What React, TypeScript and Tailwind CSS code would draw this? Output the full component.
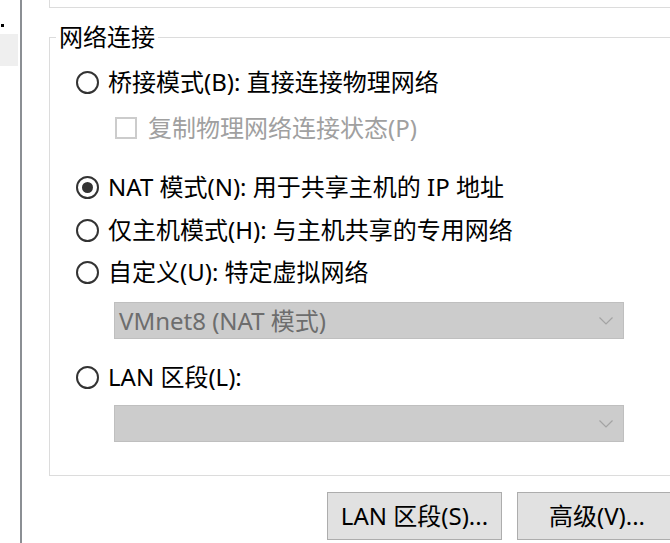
import React from 'react';

const font = { fontFamily: '"Noto Sans", "Noto Sans CJK SC", sans-serif' };

function Radio({ checked, label }: { checked?: boolean; label: string }) {
  return (
    <div className="flex items-center h-[42px] pl-[26px]">
      <span className="w-[23px] h-[23px] rounded-full border-2 border-[#333333] flex items-center justify-center shrink-0">
        {checked && <span className="w-[11px] h-[11px] rounded-full bg-[#333333]" />}
      </span>
      <span className="ml-[9px] text-black whitespace-nowrap">{label}</span>
    </div>
  );
}

function Select({ value }: { value?: string }) {
  return (
    <div className="ml-[64px] w-[510px] h-[37px] bg-[#cccccc] border border-[#bfbfbf] flex items-center justify-between pl-[4px] pr-[9px]">
      <span className="text-[#6d6d6d] whitespace-nowrap">{value}</span>
      <svg width="16" height="10" viewBox="0 0 16 10" fill="none">
        <path d="M1.5 1.5L8 8l6.5-6.5" stroke="#a3a3a3" strokeWidth="1.2" />
      </svg>
    </div>
  );
}

export default function App() {
  return (
    <div className="w-[670px] h-[543px] bg-white flex overflow-hidden text-[24px] leading-[26px]" style={font}>
      {/* left strip */}
      <div className="w-[20px] shrink-0 flex flex-col">
        <div className="h-[34px] relative">
          <span className="absolute left-[1px] top-[24px] w-[3px] h-[3px] bg-black" />
        </div>
        <div className="h-[32px] w-[18px] bg-[#efefef]" />
      </div>
      <div className="w-[2px] shrink-0 bg-[#8b8f94]" />

      {/* main */}
      <div className="flex-1 flex flex-col">
        <div className="ml-[27px] -mr-[10px] h-[8px] border-l border-b border-[#dcdcdc]" />

        <fieldset className="ml-[27px] -mr-[10px] mt-[16px] border border-[#dcdcdc] pb-[33px]">
          <legend className="ml-[6px] px-[3px] text-black leading-[26px]">网络连接</legend>
          <div className="mt-[11px]">
            <Radio label="桥接模式(B): 直接连接物理网络" />
            <div className="flex items-center h-[42px] mt-[4px] pl-[65px]">
              <span className="w-[22px] h-[22px] border-2 border-[#cccccc] bg-white shrink-0" />
              <span className="ml-[11px] text-[#a0a0a0] whitespace-nowrap">复制物理网络连接状态(P)</span>
            </div>
            <div className="mt-[17px]">
              <Radio checked label="NAT 模式(N): 用于共享主机的 IP 地址" />
            </div>
            <div className="mt-[1px]">
              <Radio label="仅主机模式(H): 与主机共享的专用网络" />
            </div>
            <Radio label="自定义(U): 特定虚拟网络" />
            <div className="mt-[9px]">
              <Select value="VMnet8 (NAT 模式)" />
            </div>
            <div className="mt-[17px]">
              <Radio label="LAN 区段(L):" />
            </div>
            <div className="mt-[7px]">
              <Select />
            </div>
          </div>
        </fieldset>

        <div className="flex gap-[15px] pl-[305px] mt-[16px]">
          <button className="w-[175px] h-[48px] shrink-0 bg-[#e1e1e1] border border-[#adadad] text-black whitespace-nowrap">
            LAN 区段(S)...
          </button>
          <button className="w-[160px] h-[48px] shrink-0 bg-[#e1e1e1] border border-[#adadad] text-black whitespace-nowrap">
            高级(V)...
          </button>
        </div>
      </div>
    </div>
  );
}
